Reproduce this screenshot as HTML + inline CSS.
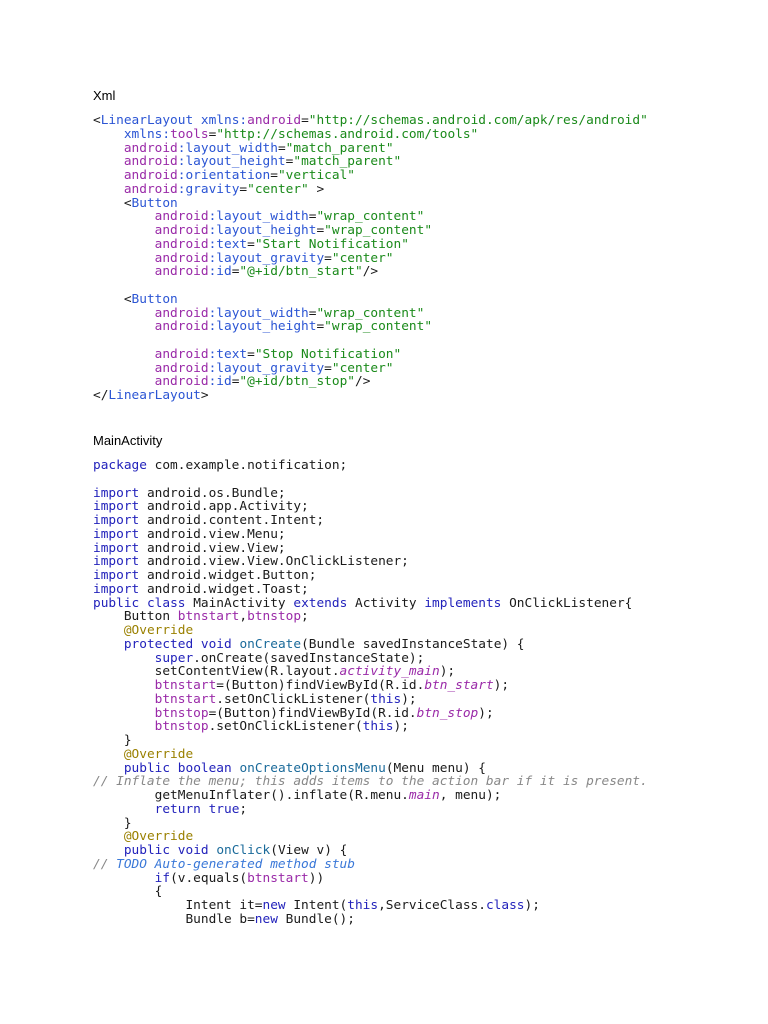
<!DOCTYPE html>
<html><head><meta charset="utf-8"><style>
body{margin:0;background:#fff;width:768px;height:1024px;position:relative;overflow:hidden}
.l{position:absolute;left:93px;font-family:"Liberation Sans",sans-serif;font-size:13px;color:#000}
pre{position:absolute;left:93px;margin:0;font-family:"DejaVu Sans Mono",monospace;font-size:12.8px;line-height:13.75px;color:#1a1a1a}
.t{color:#2b55d4}.a{color:#9a2aa8}.v{color:#1a8a1a}
.k{color:#2222bb}.f{color:#9a2aa8}.fi{color:#9a2aa8;font-style:italic}.n{color:#9a8000}.m{color:#1a6a9a}
.c{color:#888;font-style:italic}.td{color:#3a78d8;font-style:italic}
</style></head><body>
<div class="l" style="top:88px">Xml</div>
<pre style="top:114px">&lt;<span class="t">LinearLayout</span> <span class="t">xmlns:</span><span class="a">android</span>=<span class="v">"http://schemas.android.com/apk/res/android"</span>
    <span class="t">xmlns:</span><span class="a">tools</span>=<span class="v">"http://schemas.android.com/tools"</span>
    <span class="a">android</span><span class="t">:layout_width</span>=<span class="v">"match_parent"</span>
    <span class="a">android</span><span class="t">:layout_height</span>=<span class="v">"match_parent"</span>
    <span class="a">android</span><span class="t">:orientation</span>=<span class="v">"vertical"</span>
    <span class="a">android</span><span class="t">:gravity</span>=<span class="v">"center"</span> &gt;
    &lt;<span class="t">Button</span>
        <span class="a">android</span><span class="t">:layout_width</span>=<span class="v">"wrap_content"</span>
        <span class="a">android</span><span class="t">:layout_height</span>=<span class="v">"wrap_content"</span>
        <span class="a">android</span><span class="t">:text</span>=<span class="v">"Start Notification"</span>
        <span class="a">android</span><span class="t">:layout_gravity</span>=<span class="v">"center"</span>
        <span class="a">android</span><span class="t">:id</span>=<span class="v">"@+id/btn_start"</span>/&gt;

    &lt;<span class="t">Button</span>
        <span class="a">android</span><span class="t">:layout_width</span>=<span class="v">"wrap_content"</span>
        <span class="a">android</span><span class="t">:layout_height</span>=<span class="v">"wrap_content"</span>

        <span class="a">android</span><span class="t">:text</span>=<span class="v">"Stop Notification"</span>
        <span class="a">android</span><span class="t">:layout_gravity</span>=<span class="v">"center"</span>
        <span class="a">android</span><span class="t">:id</span>=<span class="v">"@+id/btn_stop"</span>/&gt;
&lt;/<span class="t">LinearLayout</span>&gt;</pre>
<div class="l" style="top:433px">MainActivity</div>
<pre style="top:459px"><span class="k">package</span> com.example.notification;

<span class="k">import</span> android.os.Bundle;
<span class="k">import</span> android.app.Activity;
<span class="k">import</span> android.content.Intent;
<span class="k">import</span> android.view.Menu;
<span class="k">import</span> android.view.View;
<span class="k">import</span> android.view.View.OnClickListener;
<span class="k">import</span> android.widget.Button;
<span class="k">import</span> android.widget.Toast;
<span class="k">public</span> <span class="k">class</span> MainActivity <span class="k">extends</span> Activity <span class="k">implements</span> OnClickListener{
    Button <span class="f">btnstart</span>,<span class="f">btnstop</span>;
    <span class="n">@Override</span>
    <span class="k">protected</span> <span class="k">void</span> <span class="m">onCreate</span>(Bundle savedInstanceState) {
        <span class="k">super</span>.onCreate(savedInstanceState);
        setContentView(R.layout.<span class="fi">activity_main</span>);
        <span class="f">btnstart</span>=(Button)findViewById(R.id.<span class="fi">btn_start</span>);
        <span class="f">btnstart</span>.setOnClickListener(<span class="k">this</span>);
        <span class="f">btnstop</span>=(Button)findViewById(R.id.<span class="fi">btn_stop</span>);
        <span class="f">btnstop</span>.setOnClickListener(<span class="k">this</span>);
    }
    <span class="n">@Override</span>
    <span class="k">public</span> <span class="k">boolean</span> <span class="m">onCreateOptionsMenu</span>(Menu menu) {
<span class="c">// Inflate the menu; this adds items to the action bar if it is present.</span>
        getMenuInflater().inflate(R.menu.<span class="fi">main</span>, menu);
        <span class="k">return</span> <span class="k">true</span>;
    }
    <span class="n">@Override</span>
    <span class="k">public</span> <span class="k">void</span> <span class="m">onClick</span>(View v) {
<span class="c">// </span><span class="td">TODO Auto-generated method stub</span>
        <span class="k">if</span>(v.equals(<span class="f">btnstart</span>))
        {
            Intent it=<span class="k">new</span> Intent(<span class="k">this</span>,ServiceClass.<span class="k">class</span>);
            Bundle b=<span class="k">new</span> Bundle();</pre>
</body></html>
